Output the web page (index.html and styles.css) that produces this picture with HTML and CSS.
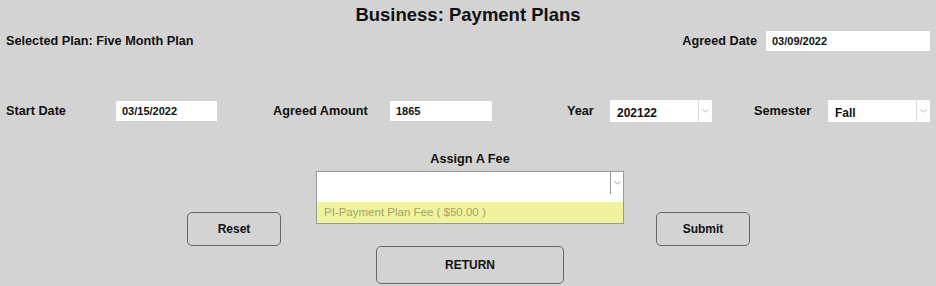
FILE: index.html
```html
<!DOCTYPE html>
<html lang="en">
<head>
  <meta charset="UTF-8">
  <meta name="viewport" content="width=device-width, initial-scale=1.0">
  <title>Business: Payment Plans</title>
  <link rel="stylesheet" href="styles.css">
</head>
<body>

<div class="page">
  <div class="page-title">Business: Payment Plans</div>

  <div class="top-row">
    <div class="selected-plan">Selected Plan: Five Month Plan</div>
    <div class="field">
      <label class="label label-agreed-date">Agreed Date</label>
      <input class="text-input wide" type="text" value="03/09/2022">
    </div>
  </div>

  <div class="detail-row">
    <div class="field">
      <label class="label label-start">Start Date</label>
      <input class="text-input" type="text" value="03/15/2022">
    </div>
    <div class="field gap-amount">
      <label class="label label-amount">Agreed Amount</label>
      <input class="text-input" type="text" value="1865">
    </div>
    <div class="field gap-year">
      <label class="label label-year">Year</label>
      <div class="select-box">
        <span class="select-value">202122</span>
        <span class="select-arrow">
          <svg width="7" height="4" viewBox="0 0 7 4"><polyline points="0.5,0.5 3.5,3 6.5,0.5" fill="none" stroke="#b5b5b5" stroke-width="1"/></svg>
        </span>
      </div>
    </div>
    <div class="field gap-semester">
      <label class="label label-semester">Semester</label>
      <div class="select-box">
        <span class="select-value">Fall</span>
        <span class="select-arrow">
          <svg width="7" height="4" viewBox="0 0 7 4"><polyline points="0.5,0.5 3.5,3 6.5,0.5" fill="none" stroke="#b5b5b5" stroke-width="1"/></svg>
        </span>
      </div>
    </div>
  </div>

  <div class="fee-section">
    <div class="fee-title">Assign A Fee</div>
    <div class="fee-dropdown">
      <div class="fee-select">
        <span class="select-value"></span>
        <span class="select-arrow fee-arrow">
          <svg width="7" height="4" viewBox="0 0 7 4"><polyline points="0.5,0.5 3.5,3 6.5,0.5" fill="none" stroke="#a0a0a0" stroke-width="1"/></svg>
        </span>
      </div>
      <div class="fee-list">
        <div class="fee-blank"></div>
        <div class="fee-option">PI-Payment Plan Fee ( $50.00 )</div>
      </div>
    </div>
  </div>

  <div class="actions">
    <button class="btn btn-small">Reset</button>
    <button class="btn btn-small">Submit</button>
  </div>

  <div class="return-row">
    <button class="btn btn-return">RETURN</button>
  </div>
</div>

</body>
</html>
```

FILE: styles.css
```css
body {
  margin: 0;
  padding: 0;
  background: #d3d3d3;
  font-family: "Liberation Sans", Arial, sans-serif;
  font-weight: bold;
  color: #111;
  overflow: hidden;
}

.page {
  width: 936px;
  height: 286px;
}

/* Title */
.page-title {
  text-align: center;
  font-size: 18.5px;
  height: 30px;
  line-height: 29px;
}

/* Top row */
.top-row {
  display: flex;
  justify-content: space-between;
  align-items: center;
  padding: 0 6px;
  margin-top: 1px;
  height: 20px;
}

.selected-plan {
  font-size: 12.7px;
}

.field {
  display: flex;
  align-items: center;
}

.label {
  font-size: 12.7px;
}

.label-agreed-date {
  margin-right: 9px;
}

.text-input {
  width: 101px;
  height: 20px;
  box-sizing: border-box;
  border: none;
  outline: none;
  background: #fff;
  padding: 0 6px;
  font-family: "Liberation Sans", Arial, sans-serif;
  font-weight: bold;
  font-size: 11px;
  color: #111;
}

.text-input.wide {
  width: 164px;
}

/* Detail row */
.detail-row {
  display: flex;
  align-items: center;
  padding-left: 6px;
  margin-top: 49px;
  height: 22px;
}

.label-start { width: 110px; }
.label-amount { width: 117px; }
.label-year { width: 43px; }
.label-semester { width: 74px; }

.gap-amount { margin-left: 56px; }
.gap-year { margin-left: 75px; }
.gap-semester { margin-left: 42px; }

.gap-amount .text-input { width: 102px; }

.select-box {
  display: flex;
  width: 102px;
  height: 22px;
  background: #fff;
}

.select-value {
  flex: 1;
  padding: 5px 0 0 7px;
  font-size: 12px;
  line-height: 16px;
}

.select-arrow {
  width: 13px;
  border-left: 1px solid #dcdcdc;
  display: flex;
  align-items: center;
  justify-content: center;
}

/* Fee section */
.fee-section {
  margin-left: 316px;
  width: 308px;
  margin-top: 29px;
}

.fee-title {
  text-align: center;
  font-size: 12.7px;
  height: 16px;
  line-height: 16px;
}

.fee-dropdown {
  position: relative;
  margin-top: 4px;
}

.fee-select {
  display: flex;
  height: 24px;
  box-sizing: border-box;
  border: 1px solid #999;
  background: #fff;
}

.fee-arrow {
  border-left: 1px solid #999;
  width: 12px;
}

.fee-list {
  position: absolute;
  top: 23px;
  left: 0;
  width: 308px;
  box-sizing: border-box;
  border: 1px solid #999;
  border-top: none;
  z-index: 2;
}

.fee-blank {
  height: 8px;
  background: #fff;
}

.fee-option {
  height: 21px;
  line-height: 21px;
  padding-left: 7px;
  background: #eff39d;
  color: #a3a36a;
  font-weight: normal;
  font-size: 11.5px;
}

/* Buttons */
.actions {
  display: flex;
  justify-content: space-between;
  margin-left: 187px;
  width: 563px;
  margin-top: 17px;
}

.btn {
  background: transparent;
  border: 1px solid #666;
  border-radius: 5px;
  font-family: "Liberation Sans", Arial, sans-serif;
  font-weight: bold;
  font-size: 12px;
  color: #111;
  cursor: pointer;
}

.btn-small {
  width: 94px;
  height: 34px;
}

.return-row {
  display: flex;
  justify-content: center;
  margin-left: 4px;
}

.btn-return {
  width: 188px;
  height: 38px;
}
```
